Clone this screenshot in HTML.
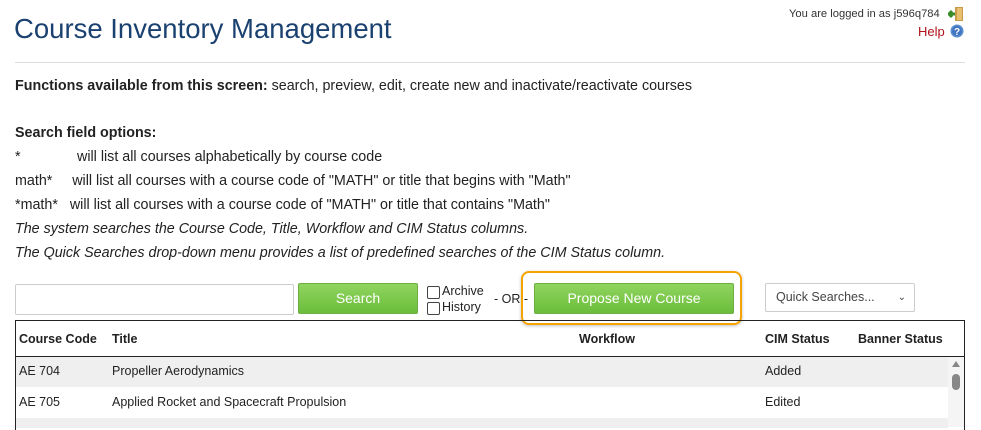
<!DOCTYPE html>
<html><head><style>
body{margin:0;width:981px;height:423px;overflow:hidden;background:#fff;font-family:"Liberation Sans",sans-serif;color:#222;position:relative}
.a{position:absolute;white-space:nowrap}
.t{font-size:14.3px}
.btn{position:absolute;background:linear-gradient(#8fd45e,#6cbd3c);border:1px solid #6cb043;border-radius:2px;color:#fff;font-size:14px;text-align:center;box-sizing:border-box}
.cb{position:absolute;width:11px;height:11px;border:1px solid #444;border-radius:2px;background:#fff}
.th{position:absolute;font-size:12.5px;font-weight:bold;top:332px}
.td{position:absolute;font-size:12.5px}
</style></head><body>
<div class="a" style="left:14px;top:13px;font-size:27.5px;color:#1b4170">Course Inventory Management</div>
<div class="a" style="left:789px;top:8px;font-size:11.2px;color:#333">You are logged in as j596q784</div>
<svg class="a" style="left:948px;top:6px" width="17" height="16"><rect x="7" y="1" width="8" height="14" fill="#c89a4a"/><rect x="9" y="2" width="5" height="12" fill="#e8c070"/><path d="M1 8h6M4 5l-3 3 3 3" stroke="#3a8a2a" stroke-width="3" fill="none"/></svg>
<div class="a" style="left:918px;top:24px;font-size:13px;color:#b0131b">Help</div>
<svg class="a" style="left:950px;top:24px" width="14" height="14"><circle cx="7" cy="7" r="6.5" fill="#5b8fd0"/><circle cx="7" cy="7" r="5" fill="#3f75c2"/><text x="7" y="11" font-size="10" font-weight="bold" fill="#fff" text-anchor="middle" font-family="Liberation Sans">?</text></svg>
<div class="a" style="left:15px;top:62px;width:950px;height:1px;background:#ddd"></div>
<div class="a t" style="left:15px;top:78px"><b>Functions available from this screen:</b> search, preview, edit, create new and inactivate/reactivate courses</div>
<div class="a t" style="left:15px;top:125px"><b>Search field options:</b></div>
<div class="a t" style="left:15px;top:149px">*</div><div class="a t" style="left:77px;top:149px">will list all courses alphabetically by course code</div>
<div class="a t" style="left:15px;top:173px">math*&nbsp;&nbsp;&nbsp;&nbsp; will list all courses with a course code of "MATH" or title that begins with "Math"</div>
<div class="a t" style="left:15px;top:197px">*math*&nbsp;&nbsp; will list all courses with a course code of "MATH" or title that contains "Math"</div>
<div class="a t" style="left:15px;top:221px;font-style:italic">The system searches the Course Code, Title, Workflow and CIM Status columns.</div>
<div class="a t" style="left:15px;top:245px;font-style:italic">The Quick Searches drop-down menu provides a list of predefined searches of the CIM Status column.</div>
<div class="a" style="left:15px;top:284px;width:279px;height:31px;border:1px solid #ccc;border-radius:2px;box-sizing:border-box"></div>
<div class="btn" style="left:298px;top:283px;width:120px;height:31px;line-height:29px">Search</div>
<div class="cb" style="left:427px;top:286px"></div><div class="a" style="left:442px;top:284px;font-size:12.5px">Archive</div>
<div class="cb" style="left:427px;top:302px"></div><div class="a" style="left:442px;top:300px;font-size:12.5px">History</div>
<div class="a" style="left:494px;top:292px;font-size:12.5px">- OR -</div>
<div class="a" style="left:521px;top:271px;width:221px;height:54px;border:2px solid #f4a300;border-radius:8px;box-sizing:border-box;box-shadow:0 1px 3px rgba(0,0,0,.25)"></div>
<div class="btn" style="left:534px;top:283px;width:200px;height:31px;line-height:29px">Propose New Course</div>
<div class="a" style="left:765px;top:283px;width:150px;height:29px;border:1px solid #ccc;border-radius:2px;box-sizing:border-box;font-size:12.5px;color:#444;line-height:27px;padding-left:10px">Quick Searches...<span style="position:absolute;right:8px;font-size:10px">&#8964;</span></div>
<div class="a" style="left:15px;top:320px;width:950px;height:110px;border:1px solid #222;border-bottom:none;box-sizing:border-box"></div>
<div class="a" style="left:15px;top:356px;width:950px;height:1px;background:#222"></div>
<div class="th" style="left:19px">Course Code</div><div class="th" style="left:112px">Title</div><div class="th" style="left:579px">Workflow</div><div class="th" style="left:765px">CIM Status</div><div class="th" style="left:858px">Banner Status</div>
<div class="a" style="left:16px;top:357px;width:932px;height:30px;background:#efefef"></div>
<div class="a" style="left:16px;top:418px;width:932px;height:10px;background:#efefef"></div>
<div class="td" style="left:19px;top:364px">AE 704</div><div class="td" style="left:112px;top:364px">Propeller Aerodynamics</div><div class="td" style="left:765px;top:364px">Added</div>
<div class="td" style="left:19px;top:395px">AE 705</div><div class="td" style="left:112px;top:395px">Applied Rocket and Spacecraft Propulsion</div><div class="td" style="left:765px;top:395px">Edited</div>
<div class="a" style="left:948px;top:357px;width:16px;height:70px;background:#f5f5f5"></div>
<div class="a" style="left:952px;top:361px;width:0;height:0;border-left:4px solid transparent;border-right:4px solid transparent;border-bottom:6px solid #888"></div>
<div class="a" style="left:952px;top:374px;width:8px;height:16px;border-radius:4px;background:#888"></div>
</body></html>
